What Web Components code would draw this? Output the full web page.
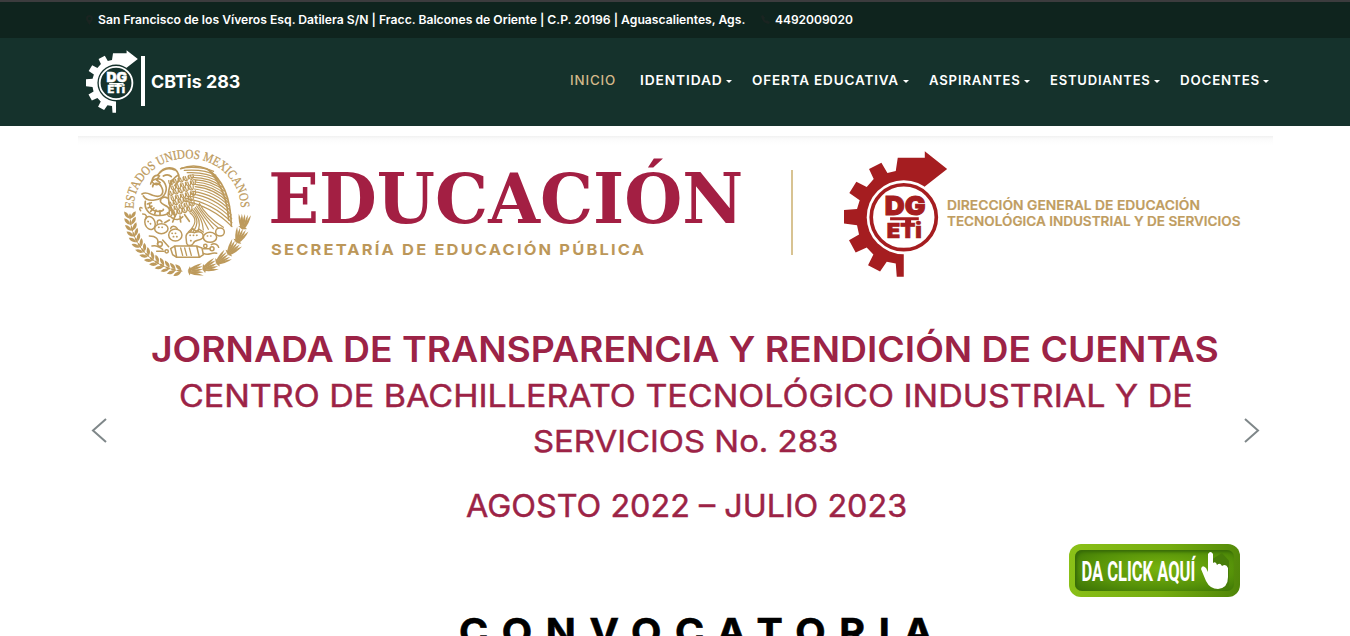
<!DOCTYPE html>
<html lang="es">
<head>
<meta charset="utf-8">
<title>CBTis 283</title>
<style>
html,body{margin:0;height:100%;overflow:hidden;background:#fff;font-family:Inter,"Open Sans",sans-serif}
</style>
</head>
<body>
<cbt-page></cbt-page>
<script>
const ctx = document.createElement('canvas').getContext('2d');
const define = (name, html, after) => customElements.define(name, class extends HTMLElement {
  connectedCallback() {
    if (this.shadowRoot) return;
    const t = document.createElement('template');
    t.innerHTML = html;
    this.attachShadow({mode: 'open'}).append(t.content.cloneNode(true));
    if (after) after(this, this.shadowRoot);
  }
});

/* One line of text whose ink spans exactly the width "w". */
customElements.define('fit-text', class extends HTMLElement {
  connectedCallback() {
    if (this.shadowRoot) return;
    const a = (n, d) => this.getAttribute(n) ?? d;
    const w = +a('w'), h = +a('h'), base = +a('base'), size = +a('size');
    const weight = a('weight', '500'), ls = a('ls', '0'), fam = a('family', 'Inter');
    const text = a('text');
    ctx.font = `${weight} ${size}px "${fam}"`;
    ctx.letterSpacing = ls + 'px';
    const m = ctx.measureText(text);
    const sx = w / (m.actualBoundingBoxLeft + m.actualBoundingBoxRight);
    this.attachShadow({mode: 'open'}).innerHTML = `
      <style>:host{display:block;flex:none;width:${w}px;height:${h}px}
      svg{display:block;overflow:visible}
      text{font:${weight} ${size}px "${fam}",sans-serif;letter-spacing:${ls}px;fill:currentColor;stroke:currentColor;stroke-width:${a('stroke', 0)};white-space:pre}</style>
      <svg width="${w}" height="${h}"><text transform="translate(0 ${base}) scale(${sx} 1)" x="${m.actualBoundingBoxLeft}" y="0"></text></svg>`;
    this.shadowRoot.querySelector('text').textContent = text;
  }
});

define('dgeti-mark', `
<style>:host{display:block;flex:none}svg{display:block;width:100%;height:100%}
text{font-family:Inter,sans-serif;font-weight:900}</style>
<svg viewBox="195 32 310 380" preserveAspectRatio="none" fill="currentColor">
<path d="M356 52H437V33L504 86 437 139 374 231V410H353L350 370 323 365 303 394 267 375 283 343 263 322 230 337 210 300 240 283 234 255 195 250V209L234 206 242 180 211 158 232 124 263 140 284 116 270 86 307 67 325 98 350 92Z"/>
<circle cx="374" cy="231" r="111" fill="var(--hole,#fff)"/>
<circle cx="374" cy="231" r="97.500" fill="none" stroke="currentColor" stroke-width="11"/>
<text x="317" y="223" font-size="79" textLength="122" lengthAdjust="spacingAndGlyphs" stroke="currentColor" stroke-width="3">DG</text>
<path d="M333 231h86v9h-86zM378 238h18v14h-18z"/>
<text x="323" y="294" font-size="62" textLength="105" lengthAdjust="spacingAndGlyphs" stroke="currentColor" stroke-width="2">ETi</text>
</svg>`);

define('national-seal', `
<style>:host{display:block;flex:none;width:150px;height:145px;color:#bd9a5c}svg{display:block}
text{font:39px "Liberation Serif",serif;fill:currentColor;stroke:currentColor;stroke-width:.8}</style>
<svg width="150" height="145" viewBox="0 0 450 435" fill="none" stroke="currentColor" stroke-width="3" stroke-linecap="round">
<defs><path id="arc" d="M71 206A161 151 0 0 1 393 206"/></defs>
<text><textPath href="#arc" textLength="488" lengthAdjust="spacingAndGlyphs">ESTADOS UNIDOS MEXICANOS</textPath></text>
<g id="feathers"></g>
<g stroke-width="5">
<path d="M126 126c0-16 12-24 22-18l-8 12 10 8c-6 8-14 8-24-2M144 104c18-26 52-28 62 0 4 14-4 26-12 32M150 98c10-10 26-16 44-8M160 108c10-6 18-4 24 2M206 104c-14 8-22 18-26 34"/>
<path d="M96 162c12-8 22 0 32 4 28 10 36-8 26-26-8-16-26-10-26 0M100 168c8 12 22 14 34 12 34-4 42-34 28-54-14-18-38-8-40 6"/>
<path d="M106 184c-4 22 10 40 32 42 22 2 44-2 40-18-2-12-22-12-26-22-4-12 10-18 20-12M118 190c0 14 10 24 26 24 8 0 18-2 16-6"/>
<path d="M112 192l12-4M114 204l12-6M122 214l10-10M134 222l4-12M150 224v-12"/>
<path d="M184 232c12 10 26 8 34-2M196 226l-8 20M210 228l2 18M224 224l14 20M178 240l-14 8"/>
</g>
<g stroke-width="4.500">
<ellipse cx="120" cy="249" rx="15" ry="20" transform="rotate(-20 120 249)"/><ellipse cx="154" cy="266" rx="20" ry="15"/><ellipse cx="196" cy="285" rx="20" ry="18"/>
<path d="M228 292c0-20 18-16 26-14 16-8 30 2 24 16-10 10-24 4-28 16-4 10-18 8-20 0z"/><ellipse cx="300" cy="292" rx="20" ry="15"/><ellipse cx="330" cy="276" rx="13" ry="12"/>
<path d="M92 212c-6-6-2-12 4-8M98 222c12 0 14 8 8 16M142 250c-2-10 8-14 14-4M182 266c2-10 14-10 20 0M240 276l8-10 10 8 10-6 12 8"/>
<path d="M194 318l66 0 8 34h-68zM260 318l16 6 4 20-12 8M194 318l-12 8 6 18 12 8"/>
<path d="M118 288c20 0 30 10 24 24M126 318c12-4 22 2 32 10M158 300l18 20M140 334h22M280 326h20M304 314c10-6 20 0 22 8M280 340c16 8 24-4 40 0"/>
<circle cx="150" cy="312" r="7"/><circle cx="170" cy="334" r="5"/><circle cx="306" cy="326" r="6"/><circle cx="286" cy="318" r="5"/>
</g>
<path stroke-width="4" d="M212 324l6 22M224 324l6 22M238 324l6 22" />
<path stroke-width="5" stroke-dasharray="1 9" d="M114 244l12 12M146 262h18M186 280h20M190 290h14M240 286h28M292 288h18M242 302h8"/>
<g id="wreath" fill="currentColor" stroke="none"></g>
</svg>`, (host, root) => {
  const f = root.getElementById('feathers'), w = root.getElementById('wreath');
  let d = '';
  // long primary feathers of the raised wing
  for (let i = 0; i < 15; i++) {
    const t = i / 14;
    const x1 = 214 + 42 * Math.sin(t * 3), y1 = 84 + t * 98;
    const x2 = 282 + 84 * Math.sin(.35 + t * 1.25), y2 = 94 + t * 166;
    d += `M${x1} ${y1}Q${(x1 + x2) / 2 + 12} ${y1 - 6 + t * 22} ${x2} ${y2}`;
  }
  for (let i = 0; i < 8; i++) d += `M${268 - i * 4} ${190 + i * 4}Q${286 - i * 2} ${228 + i * 2} ${340 - i * 15} ${262 + i * 2}`;
  // rows of small body feathers
  for (let r = 0; r < 7; r++) for (let c = 0; c < 5; c++) {
    const x = 176 + c * 15 + (r % 2) * 7 - (r > 4 ? 4 : 0), y = 122 + r * 16 - c * 4;
    d += `M${x} ${y}q1 13 9 12q7-3 4-14M${x + 5} ${y}l3 8`;
  }
  f.innerHTML = `<path d="M212 86Q250 70 290 86Q362 130 364 258M300 94Q350 150 356 240M186 120Q160 180 196 228" stroke-width="5"/><path d="${d}" stroke-width="3.6"/>`;
  let s = '';
  const leaf = (a, r, rot, l, b) => {
    const x = 232 + r * Math.cos(a), y = 222 + r * Math.sin(a);
    s += `<path transform="translate(${x} ${y}) rotate(${rot})" d="M${-l} 0Q0 ${-b} ${l} 0Q0 ${b} ${-l} 0Z"/>`;
  };
  for (let i = 0; i < 14; i++) {
    const a = Math.PI * (.995 - i * .034), g = a * 180 / Math.PI;
    leaf(a, 182, g + 55, 13, 10); leaf(a, 162, g + 125, 13, 10); leaf(a - .03, 172, g + 90, 10, 7);
  }
  for (let i = 0; i < 6; i++) {
    const a = Math.PI * (.045 + i * .082), g = a * 180 / Math.PI;
    for (const k of [-1, -.5, 0, .5, 1]) leaf(a, 171 + k * 11, g - 90 + k * 18, 24, 7);
    leaf(a + .1, 171, g + 10, 14, 8);
  }
  w.innerHTML = s;
});

define('top-bar', `
<style>:host{display:flex;box-sizing:border-box;height:38px;border-top:2px solid #3c3c3e;background:#0f241e;color:#fff;padding-left:86px;align-items:flex-start}
svg{flex:none;fill:#1a2421;margin-top:13px}.pin{margin-right:5px}.tel{margin:13px 5px 0 15px}</style>
<svg class="pin" width="7" height="10" viewBox="0 0 7 10"><path fill-rule="evenodd" d="M3.500 0A3.500 3.500 0 0 1 7 3.500C7 5.500 5 7.500 3.500 10 2 7.500 0 5.500 0 3.500A3.500 3.500 0 0 1 3.500 0ZM3.500 2A1.500 1.500 0 1 0 3.500 5 1.500 1.500 0 0 0 3.500 2Z"/></svg>
<fit-text w="648" h="36" base="22" size="12" weight="600" text="San Francisco de los Víveros Esq. Datilera S/N | Fracc. Balcones de Oriente | C.P. 20196 | Aguascalientes, Ags."></fit-text>
<svg class="tel" width="9" height="9" viewBox="0 0 9 9"><path d="M0 1 2 0 4 3 3 4 5 6 6 5 9 7 8 9Q1 8 0 1Z"/></svg>
<fit-text w="78" h="36" base="22" size="12" weight="600" text="4492009020"></fit-text>`);

define('nav-item', `
<style>:host{display:flex;align-items:flex-start;color:#fff}:host([active]){color:#d3b98a}
i{width:0;height:0;border:3px solid transparent;border-top-color:currentColor;border-bottom:0;margin:42px 0 0 4.500px}:host([active]) i{display:none}</style>
<slot></slot><i></i>`);

define('main-nav', `
<style>:host{display:flex;height:88px;background:#15322c;color:#fff;padding-left:86px;align-items:flex-start}
dgeti-mark{width:52px;height:63px;margin-top:12px;color:#fff;--hole:#15322c}
.bar{width:4px;height:50px;background:#fff;margin:18px 6px 0 3px}
nav{display:flex;gap:20px;margin-left:330.500px}nav-item[active]{margin-right:5px}</style>
<dgeti-mark></dgeti-mark><div class="bar"></div>
<fit-text w="89" h="88" base="50.300" size="17.500" weight="700" text="CBTis 283"></fit-text>
<nav>
<nav-item active><fit-text w="44.500" h="88" base="47" size="12.800" weight="500" ls="0.800" text="INICIO"></fit-text></nav-item>
<nav-item><fit-text w="81.500" h="88" base="47" size="12.800" weight="600" ls="0.800" text="IDENTIDAD"></fit-text></nav-item>
<nav-item><fit-text w="146" h="88" base="47" size="12.800" weight="600" ls="0.800" text="OFERTA EDUCATIVA"></fit-text></nav-item>
<nav-item><fit-text w="90.500" h="88" base="47" size="12.800" weight="600" ls="0.800" text="ASPIRANTES"></fit-text></nav-item>
<nav-item><fit-text w="99.500" h="88" base="47" size="12.800" weight="600" ls="0.800" text="ESTUDIANTES"></fit-text></nav-item>
<nav-item><fit-text w="79" h="88" base="47" size="12.800" weight="600" ls="0.800" text="DOCENTES"></fit-text></nav-item>
</nav>`);

define('agency-row', `
<style>:host{display:flex;height:149px;padding:4px 0 0 32px;align-items:flex-start}
.edu{margin-left:10.500px;color:#a31f43}.edu fit-text+fit-text{color:#bc9759}
.rule{width:2px;height:85px;background:#d8c392;margin:30px 51px 0 50px}
dgeti-mark{width:103.500px;height:126.500px;margin-top:11px;color:#a51d20}
.dir{margin-left:-1px;color:#bf9d61}</style>
<national-seal></national-seal>
<div class="edu">
<fit-text w="470.500" h="90" base="82.500" size="70" weight="700" family="DejaVu Serif" text="EDUCACIÓN"></fit-text>
<fit-text w="372.500" h="30" base="25" size="15.200" weight="700" ls="2" text="SECRETARÍA DE EDUCACIÓN PÚBLICA"></fit-text>
</div>
<div class="rule"></div>
<dgeti-mark></dgeti-mark>
<div class="dir">
<fit-text w="253" h="72" base="70.300" size="13.300" weight="600" stroke=".2" text="DIRECCIÓN GENERAL DE EDUCACIÓN"></fit-text>
<fit-text w="294" h="20" base="14" size="13.300" weight="600" stroke=".2" text="TECNOLÓGICA INDUSTRIAL Y DE SERVICIOS"></fit-text>
</div>`);

define('click-button', `
<style>:host{display:flex;box-sizing:border-box;width:171px;height:53px;padding:6px;border-radius:12px;background:linear-gradient(100deg,#8bc118,#75ad10 55%,#4f8509);color:#fff}
div{flex:1;display:flex;border-radius:7px;background:radial-gradient(ellipse at 55% 45%,#79b40e,#559109 60%,#397006);box-shadow:inset 2px 2px 3px #386b08;padding-left:7px}
svg{margin:1px 0 0 5px;flex:none}</style>
<div><fit-text w="114" h="41" base="31" size="27" weight="700" family="Roboto" text="DA CLICK AQUÍ"></fit-text>
<svg width="28" height="39" viewBox="0 0 28 39"><path d="M10 9 21 2 31 13V36L18 38Z" fill="#477d09"/><path fill="#fff" d="M7 3Q9.500-1 12 3V12Q15 10 16 14 19 11 21 15 25 12 27 17V26Q27 37 17 38 9 38 5 30L0 18Q1 13 5 17L7 21Z"/></svg></div>`);

define('notice-slide', `
<style>:host{display:flex;flex-direction:column;width:1195px;height:470px;background:linear-gradient(#f1f1f1,#fbfbfb 3px,#fff 9px);color:#9c2346}
.l1{margin:45px 0 0 73.500px}.l2{margin-left:101.500px}.l3{margin-left:456px}.l4{margin-left:387.500px}
click-button{margin:9px 0 0 991px}</style>
<agency-row></agency-row>
<fit-text class="l1" w="1066.500" h="40" base="27.700" size="35" weight="600" text="JORNADA DE TRANSPARENCIA Y RENDICIÓN DE CUENTAS"></fit-text>
<fit-text class="l2" w="1011.500" h="45" base="33.300" size="30.500" weight="400" stroke=".45" text="CENTRO DE BACHILLERATO TECNOLÓGICO INDUSTRIAL Y DE"></fit-text>
<fit-text class="l3" w="303.500" h="55" base="33" size="30.500" weight="400" stroke=".45" text="SERVICIOS No. 283"></fit-text>
<fit-text class="l4" w="440" h="61" base="43" size="31" weight="400" stroke=".45" text="AGOSTO 2022 – JULIO 2023"></fit-text>
<click-button></click-button>`);

define('slide-carousel', `
<style>:host{display:block;position:relative;margin:10px 0 0 78px;width:1195px}
.arrow{position:absolute;top:281.500px;width:16px;height:25px;fill:none;stroke:#7f8789;stroke-width:2}
.prev{left:13px}.next{right:13px}
.call{margin-left:381.500px;color:#000}</style>
<notice-slide></notice-slide>
<fit-text class="call" w="473" h="40" base="39" size="37.500" weight="700" stroke=".6" ls="13" text="CONVOCATORIA"></fit-text>
<svg class="arrow prev" viewBox="0 0 16 25"><path d="M15 1 2 12.500 15 24"/></svg>
<svg class="arrow next" viewBox="0 0 16 25"><path d="M1 1 14 12.500 1 24"/></svg>`);

define('cbt-page', `
<style>:host{display:block;width:1350px;height:636px;overflow:hidden;background:#fff}</style>
<top-bar></top-bar><main-nav></main-nav><slide-carousel></slide-carousel>`);
</script>
</body>
</html>
